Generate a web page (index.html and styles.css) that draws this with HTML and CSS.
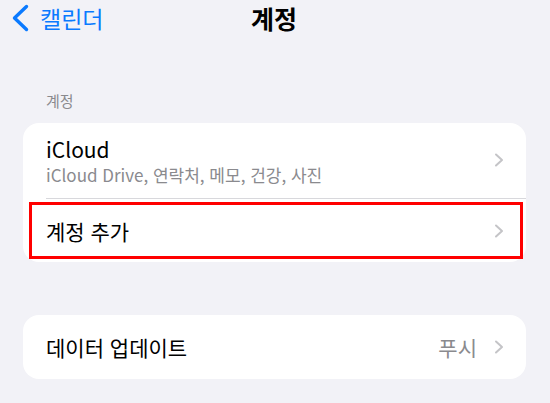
FILE: index.html
```html
<!DOCTYPE html>
<html lang="ko">
<head>
    <meta charset="UTF-8">
    <meta name="viewport" content="width=device-width, initial-scale=1.0">
    <title>계정</title>
    <link rel="stylesheet" href="styles.css">
</head>
<body>

    <!-- Navigation bar -->
    <div class="navbar">
        <a href="#" class="back">
            <svg width="18" height="28" viewBox="0 0 18 28">
                <path d="M15.5 2.5 L3.5 14 L15.5 25.5" fill="none" stroke="#0a7aff" stroke-width="3.4" stroke-linecap="round" stroke-linejoin="round"/>
            </svg>
            <span>캘린더</span>
        </a>
        <h1 class="title">계정</h1>
    </div>

    <!-- Accounts section -->
    <div class="section-label">계정</div>
    <div class="group">
        <div class="row row-tall">
            <div class="row-text">
                <div class="row-title">iCloud</div>
                <div class="row-sub">iCloud Drive, 연락처, 메모, 건강, 사진</div>
            </div>
            <svg class="chevron" width="10" height="14" viewBox="0 0 10 14"><path d="M2 1.5 L8 7 L2 12.5" fill="none" stroke="#c4c4c7" stroke-width="2" stroke-linecap="round" stroke-linejoin="round"/></svg>
        </div>
        <div class="divider"></div>
        <div class="row row-marked">
            <div class="row-title">계정 추가</div>
            <svg class="chevron" width="10" height="14" viewBox="0 0 10 14"><path d="M2 1.5 L8 7 L2 12.5" fill="none" stroke="#c4c4c7" stroke-width="2" stroke-linecap="round" stroke-linejoin="round"/></svg>
        </div>
    </div>

    <!-- Fetch section -->
    <div class="group group-second">
        <div class="row">
            <div class="row-title">데이터 업데이트</div>
            <span class="row-value">푸시</span>
            <svg class="chevron" width="10" height="14" viewBox="0 0 10 14"><path d="M2 1.5 L8 7 L2 12.5" fill="none" stroke="#c4c4c7" stroke-width="2" stroke-linecap="round" stroke-linejoin="round"/></svg>
        </div>
    </div>

</body>
</html>
```

FILE: styles.css
```css
* {
    margin: 0;
    padding: 0;
    box-sizing: border-box;
}
body {
    font-family: "Noto Sans CJK KR", "Noto Sans", sans-serif;
    background-color: #f2f2f7;
    color: #000;
    height: 100vh;
    overflow: hidden;
}
/* Navigation bar */
.navbar {
    position: relative;
    height: 36px;
    display: flex;
    align-items: center;
    justify-content: center;
}
.back {
    position: absolute;
    left: 11px;
    top: 4px;
    display: flex;
    align-items: center;
    gap: 11px;
    color: #0a7aff;
    text-decoration: none;
    font-size: 23px;
}
.back span {
    line-height: 28px;
}
.title {
    font-size: 25px;
    font-weight: 700;
    line-height: 36px;
    margin-left: -2px;
}
/* Section label */
.section-label {
    margin: 55px 0 0 46px;
    font-size: 15px;
    color: #8a8a8e;
    line-height: 20px;
}
/* Grouped card */
.group {
    display: flow-root;
    margin: 12px 24px 0 23px;
    background: #fff;
    border-radius: 16px;
}
.group-second {
    margin-top: 53px;
}
.row {
    display: flex;
    align-items: center;
    height: 64px;
    padding: 0 22px 0 23px;
}
.row-tall {
    height: 75px;
    padding-bottom: 2px;
}
.row-marked {
    height: 57px;
    margin: 3px 3px 3px 6px;
    padding: 0 16px 0 14px;
    border: 3px solid #ff0000;
}
.row-text {
    flex: 1;
}
.row-title {
    flex: 1;
    font-size: 21px;
    line-height: 30px;
}
.row-sub {
    font-size: 17px;
    color: #8a8a8e;
    line-height: 22px;
}
.row-value {
    font-size: 21px;
    color: #8a8a8e;
    margin-right: 17px;
}
.chevron {
    flex-shrink: 0;
}
.divider {
    height: 1px;
    background: #d8d8dc;
    margin-left: 23px;
}
```
